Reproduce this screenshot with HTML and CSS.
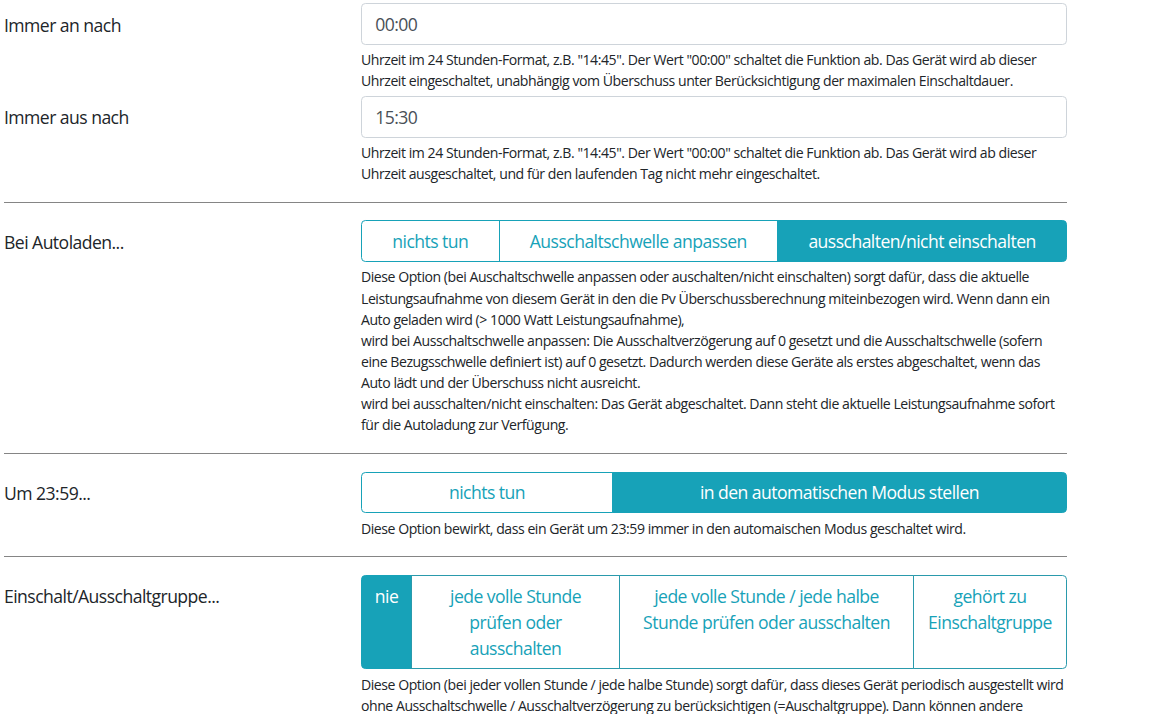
FILE: index.html
```html
<!DOCTYPE html>
<html lang="de">
<head>
<meta charset="utf-8">
<title>Geräteeinstellungen</title>
<link rel="stylesheet" href="styles.css">
</head>
<body>
<div class="page">
  <div class="field">
    <label class="label">Immer an nach</label>
    <div class="control">
      <input class="input" type="text" value="00:00">
      <p class="help">Uhrzeit im 24 Stunden-Format, z.B. "14:45". Der Wert "00:00" schaltet die Funktion ab. Das Gerät wird ab dieser Uhrzeit eingeschaltet, unabhängig vom Überschuss unter Berücksichtigung der maximalen Einschaltdauer.</p>
    </div>
  </div>
  <div class="field">
    <label class="label">Immer aus nach</label>
    <div class="control">
      <input class="input" type="text" value="15:30">
      <p class="help">Uhrzeit im 24 Stunden-Format, z.B. "14:45". Der Wert "00:00" schaltet die Funktion ab. Das Gerät wird ab dieser Uhrzeit ausgeschaltet, und für den laufenden Tag nicht mehr eingeschaltet.</p>
    </div>
  </div>
  <hr class="sep">
  <div class="field">
    <label class="label">Bei Autoladen...</label>
    <div class="control">
      <div class="btn-group">
        <button class="btn">nichts tun</button>
        <button class="btn">Ausschaltschwelle anpassen</button>
        <button class="btn active">ausschalten/nicht einschalten</button>
      </div>
      <p class="help">Diese Option (bei Auschaltschwelle anpassen oder auschalten/nicht einschalten) sorgt dafür, dass die aktuelle Leistungsaufnahme von diesem Gerät in den die Pv Überschussberechnung miteinbezogen wird. Wenn dann ein Auto geladen wird (&gt; 1000 Watt Leistungsaufnahme),<br>wird bei Ausschaltschwelle anpassen: Die Ausschaltverzögerung auf 0 gesetzt und die Ausschaltschwelle (sofern eine Bezugsschwelle definiert ist) auf 0 gesetzt. Dadurch werden diese Geräte als erstes abgeschaltet, wenn das Auto lädt und der Überschuss nicht ausreicht.<br>wird bei ausschalten/nicht einschalten: Das Gerät abgeschaltet. Dann steht die aktuelle Leistungsaufnahme sofort für die Autoladung zur Verfügung.</p>
    </div>
  </div>
  <hr class="sep">
  <div class="field">
    <label class="label">Um 23:59...</label>
    <div class="control">
      <div class="btn-group">
        <button class="btn">nichts tun</button>
        <button class="btn active">in den automatischen Modus stellen</button>
      </div>
      <p class="help">Diese Option bewirkt, dass ein Gerät um 23:59 immer in den automaischen Modus geschaltet wird.</p>
    </div>
  </div>
  <hr class="sep">
  <div class="field">
    <label class="label">Einschalt/Ausschaltgruppe...</label>
    <div class="control">
      <div class="btn-group fixed">
        <button class="btn active w-nie">nie</button>
        <button class="btn w-voll">jede volle Stunde prüfen oder ausschalten</button>
        <button class="btn w-halb">jede volle Stunde / jede halbe Stunde prüfen oder ausschalten</button>
        <button class="btn w-gruppe">gehört zu Einschaltgruppe</button>
      </div>
      <p class="help">Diese Option (bei jeder vollen Stunde / jede halbe Stunde) sorgt dafür, dass dieses Gerät periodisch ausgestellt wird ohne Ausschaltschwelle / Ausschaltverzögerung zu berücksichtigen (=Auschaltgruppe). Dann können andere Geräte eingeschaltet werden.</p>
    </div>
  </div>
</div>
</body>
</html>
```

FILE: styles.css
```css
* { box-sizing: border-box; }

html, body {
  margin: 0;
  padding: 0;
  background: #fff;
}

body {
  font-family: "Open Sans", "Noto Sans", sans-serif;
  font-size: 17.6px;
  line-height: 1.5;
  letter-spacing: -0.55px;
  color: #212529;
  overflow: hidden;
}

.page {
  width: 1067px;
  padding: 3px 0 0 4px;
}

.field {
  display: grid;
  grid-template-columns: 357px 706px;
}

.field + .field {
  margin-top: 4.4px;
}

.label {
  padding-top: 8.5px;
  line-height: 26.4px;
}

.control {
  min-width: 0;
}

.input {
  display: block;
  width: 100%;
  height: 41.8px;
  padding: 6.6px 13.2px;
  font: inherit;
  letter-spacing: -0.55px;
  color: #495057;
  background: #fff;
  border: 1px solid #ced4da;
  border-radius: 4.4px;
  outline: none;
}

.help {
  margin: 4.4px 0 0;
  font-size: 14.08px;
  line-height: 21.12px;
  letter-spacing: -0.46px;
  color: #212529;
}

.sep {
  margin: 17.6px 0;
  border: 0;
  border-top: 1px solid #858585;
  height: 0;
}

.btn-group {
  display: flex;
  width: 100%;
}

.btn {
  flex: 1 1 auto;
  margin: 0;
  padding: 6.6px 13.2px;
  font: inherit;
  letter-spacing: -0.55px;
  line-height: 26.4px;
  color: #17a2b8;
  background: #fff;
  border: 1px solid #17a2b8;
  border-radius: 0;
  text-align: center;
  vertical-align: top;
  cursor: pointer;
}

.btn + .btn {
  margin-left: -1px;
}

.btn:first-child {
  border-top-left-radius: 4.4px;
  border-bottom-left-radius: 4.4px;
}

.btn:last-child {
  border-top-right-radius: 4.4px;
  border-bottom-right-radius: 4.4px;
}

.btn.active {
  color: #fff;
  background: #17a2b8;
}

.fixed .btn {
  flex: 0 0 auto;
  display: flex;
  justify-content: center;
  align-items: flex-start;
  border-color: #2a9aac;
}

.fixed .btn.active {
  border-color: #17a2b8;
}

.w-nie { width: 51px; padding-left: 12px; padding-right: 12px; }
.w-voll { width: 209px; }
.w-halb { width: 295px; }
.w-gruppe { width: 154px; padding-left: 8px; padding-right: 8px; }
```
